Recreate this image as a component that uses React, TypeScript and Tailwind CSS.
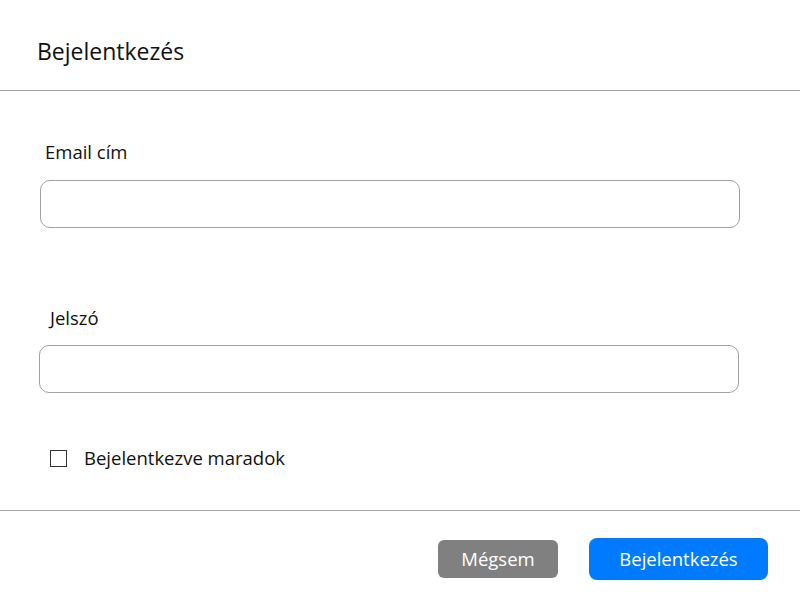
export default function App() {
  return (
    <div className="w-[800px] h-[600px] bg-white text-[#111] font-['Open_Sans',sans-serif] flex flex-col">
      <header className="h-[91px] border-b border-[#a6a6a6] flex items-start pl-[37px] pt-[36px]">
        <h1 className="text-[23px] leading-[30px]">Bejelentkezés</h1>
      </header>

      <div className="flex-1 flex flex-col">
        <label className="ml-[45px] mt-[49px] text-[18.5px] leading-[24px]">Email cím</label>
        <input
          type="email"
          className="ml-[40px] mt-[16px] w-[700px] h-[48px] rounded-[10px] border border-[#a0a0a0] outline-none px-3"
        />

        <label className="ml-[50px] mt-[78px] text-[18.5px] leading-[24px]">Jelszó</label>
        <input
          type="password"
          className="ml-[39px] mt-[15px] w-[700px] h-[48px] rounded-[10px] border border-[#a0a0a0] outline-none px-3"
        />

        <div className="ml-[50px] mt-[53px] flex items-center gap-[17px]">
          <span className="w-[17px] h-[17px] border border-[#333] bg-white" />
          <span className="text-[18.5px] leading-[24px]">Bejelentkezve maradok</span>
        </div>
      </div>

      <footer className="h-[90px] border-t border-[#a6a6a6] flex items-center justify-end pr-[32px] pt-[7px] gap-[31px]">
        <button className="w-[120px] h-[38px] rounded-[6px] bg-[#808080] text-white text-[18.5px]">Mégsem</button>
        <button className="w-[179px] h-[42px] rounded-[8px] bg-[#007bff] text-white text-[18.5px]">Bejelentkezés</button>
      </footer>
    </div>
  );
}
